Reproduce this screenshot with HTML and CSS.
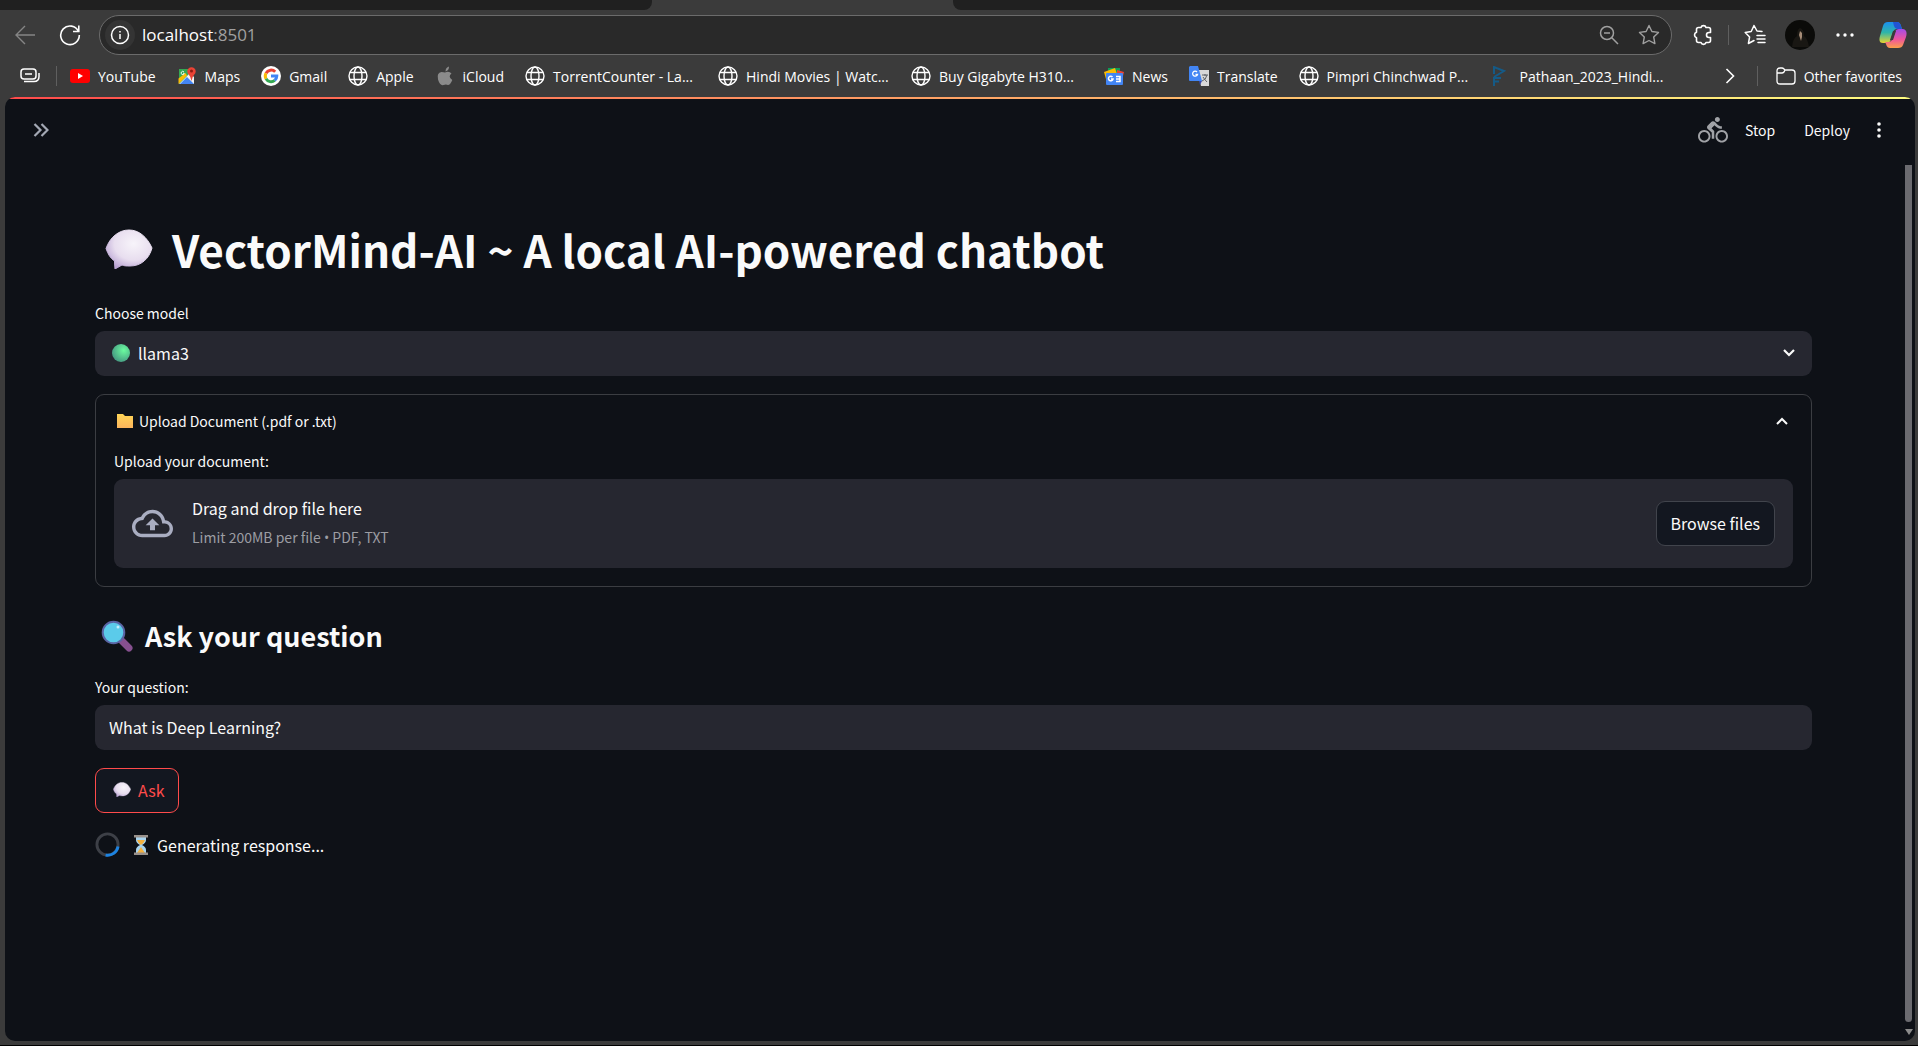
FILE: index.html
```html
<!DOCTYPE html>
<html lang="en">
<head>
<meta charset="utf-8">
<title>VectorMind-AI</title>
<link rel="stylesheet" href="styles.css">
</head>
<body>
<svg class="defs" aria-hidden="true">
  <defs>
    <radialGradient id="bubble-fill" cx="0.6" cy="0.35" r="0.7">
      <stop offset="0" stop-color="#f7f4fa"/><stop offset="0.6" stop-color="#e8deef"/><stop offset="1" stop-color="#b9a3d3"/>
    </radialGradient>
    <linearGradient id="folder-fill" x1="0" y1="0" x2="0" y2="1"><stop offset="0" stop-color="#ffd556"/><stop offset="1" stop-color="#fbb45c"/></linearGradient>
    <radialGradient id="green-fill" cx="0.65" cy="0.35" r="0.7"><stop offset="0" stop-color="#6bfb9f"/><stop offset="1" stop-color="#469a82"/></radialGradient>
    <linearGradient id="cop-a" x1="0" y1="0" x2="0" y2="1"><stop offset="0" stop-color="#1a8ff0"/><stop offset="0.5" stop-color="#2fb5a8"/><stop offset="1" stop-color="#e8d430"/></linearGradient>
    <linearGradient id="cop-b" x1="0" y1="0" x2="0" y2="1"><stop offset="0" stop-color="#a24be8"/><stop offset="0.55" stop-color="#f0569a"/><stop offset="1" stop-color="#fba04a"/></linearGradient>
    <symbol id="bubble" viewBox="0 0 48 40">
      <path d="M24 1C34 1 42 8 47 19C44 30 36 37 25 37C22 37 19 37 17 36L10 40Q9.500 36 9.500 32C5 29 3 25 1 19.500C5 8 14 1 24 1z" fill="url(#bubble-fill)" stroke="url(#bubble-fill)" stroke-linejoin="round"/>
    </symbol>
    <symbol id="globe" viewBox="0 0 20 20">
      <g fill="none" stroke="#fff" stroke-width="1.400"><circle cx="10" cy="10" r="9"/><ellipse cx="10" cy="10" rx="4" ry="9"/><path d="M2 6.500h16M2 13.500h16"/></g>
    </symbol>
  </defs>
</svg>
<div class="window">
  <div class="tabs"><span class="tab-left"></span><span class="tab-right"></span></div>
  <header class="browser">
    <div class="toolbar">
      <button class="tool" aria-label="Back"><svg width="22" height="22" viewBox="0 0 22 22" fill="none" stroke="#858585" stroke-width="1.400"><path d="M21 11H2M11 2L2 11l9 9"/></svg></button>
      <button class="tool reload" aria-label="Reload"><svg width="22" height="22" viewBox="0 0 22 22" fill="none" stroke="#fff" stroke-width="1.600"><path d="M19.500 7.500A9.300 9.300 0 1 0 20.300 11M19.800 1.500V7.500H14"/></svg></button>
      <div class="address">
        <span class="info"><svg width="20" height="20" viewBox="0 0 20 20" fill="none" stroke="#fff" stroke-width="1.500"><circle cx="10" cy="10" r="8.500"/><path d="M10 9v5M10 6v1.500"/></svg></span>
        <span class="url">localhost<span class="port">:8501</span></span>
        <button class="tool" aria-label="Zoom"><svg width="20" height="20" viewBox="0 0 20 20" fill="none" stroke="#a0a0a0" stroke-width="1.500"><circle cx="8" cy="8" r="6.500"/><path d="M5 8h6M12.800 12.800L19 19"/></svg></button>
        <button class="tool star" aria-label="Add to favorites"><svg width="22" height="22" viewBox="0 0 22 22" fill="none" stroke="#a0a0a0" stroke-width="1.400" stroke-linejoin="round"><path d="M11 1.500l2.900 6 6.600.9-4.800 4.600 1.200 6.600L11 16.500l-5.900 3.100 1.200-6.600L1.500 8.400l6.600-.9z"/></svg></button>
      </div>
      <div class="tools">
        <button class="tool" aria-label="Extensions"><svg width="20" height="22" viewBox="0 0 20 22" fill="none" stroke="#fff" stroke-width="1.600" stroke-linejoin="round"><path d="M5.500 3.500H8a2.600 2.600 0 0 1 5 0h2.500q2 0 2 2V8.500h-1.500a2.500 2.500 0 0 0 0 5h1.500v3q0 2-2 2H13a2.600 2.600 0 0 1-5 0H5.500q-2 0-2-2V13.800a2.900 2.900 0 0 1 0-5.500V5.500q0-2 2-2z"/></svg></button>
        <span class="sep"></span>
        <button class="tool" aria-label="Favorites"><svg width="22" height="22" viewBox="0 0 22 22" fill="none" stroke="#fff" stroke-width="1.500" stroke-linejoin="round" stroke-linecap="round"><path d="M18 7.500l-5-.5L10 1.500 7.200 7.500l-6 .9 4.400 4.600-1.200 6.500L10 16.500M13 11.500h8M13 15h8M14 18.500h7"/></svg></button>
        <span class="avatar"><svg width="30" height="30" viewBox="0 0 30 30"><circle cx="15" cy="15" r="15" fill="#0b0b09"/><path d="M7 27q1-9 5-11 0-7 3-8 4 1 4 8 4 3 5 11z" fill="#191713"/><path d="M15 11l2 2v4l-1 4-2-6z" fill="#a58b76"/></svg></span>
        <button class="tool" aria-label="More"><svg width="18" height="4" viewBox="0 0 18 4" fill="#fff"><circle cx="2" cy="2" r="1.700"/><circle cx="9" cy="2" r="1.700"/><circle cx="16" cy="2" r="1.700"/></svg></button>
        <button class="tool" aria-label="Copilot"><svg width="28" height="28" viewBox="0 0 28 28"><path d="M9 1h9q3 0 4 4l1 3h-5q-3 0-4 3l-2 7q-1 4-4 4H4q-5 0-3-7L4 5q1-4 5-4z" fill="url(#cop-a)"/><path d="M14 1h4q3 0 4 4l1 3h-5q-2 0-3-3z" fill="#2254d4"/><path d="M19 27h-8q-3 0-4-4l-1-2h4q3-1 4-4l2-6q1-3 4-3h4q5 1 3 8l-3 8q-1 3-5 3z" fill="url(#cop-b)"/><path d="M14 10h3l-3 9h-3z" fill="#3b3b3b"/></svg></button>
      </div>
    </div>
    <nav class="bookmarks" aria-label="Favorites bar">
      <button class="tool" aria-label="Tab groups"><svg width="20" height="16" viewBox="0 0 20 16" fill="none" stroke="#fff" stroke-width="1.500"><rect x="1" y="1" width="15" height="10" rx="3"/><path d="M5 6h7M4 13.500h10q5 0 5-5V5"/></svg></button>
      <span class="sep"></span>
      <ul class="links">
        <li><a href="#"><svg width="20" height="20" viewBox="0 0 20 20"><rect y="3" width="20" height="14" rx="3" fill="#f00"/><path d="M8 7l5 3-5 3z" fill="#fff"/></svg>YouTube</a></li>
        <li><a href="#"><svg width="20" height="20" viewBox="0 0 20 20"><path d="M2 3h12v8L2 18z" fill="#35a853"/><path d="M2 18L13 7l4 4v7z" fill="#f2f2f2"/><path d="M3 18l7-7 7 7z" fill="#4285f4"/><path d="M1.500 12.500v5.500L10 9.500 8.500 7z" fill="#fbbc04"/><path d="M14.500 15q-.5-4-2.800-6.500a4.200 4.200 0 1 1 5.600 0q-2.300 2.500-2.800 6.500z" fill="#ea4335"/><circle cx="14.500" cy="5" r="1.500" fill="#8d1b12"/><path d="M7 6a1.600 1.600 0 1 0 .3 1.300H6" fill="none" stroke="#fff" stroke-width="0.900"/></svg>Maps</a></li>
        <li><a href="#"><svg width="20" height="20" viewBox="0 0 20 20"><circle cx="10" cy="10" r="10" fill="#fff"/><g fill="none" stroke-width="3"><path d="M14.200 5.800A5.800 5.800 0 0 0 5 7.200" stroke="#ea4335"/><path d="M5 7.200a5.800 5.800 0 0 0 0 5.600" stroke="#fbbc05"/><path d="M5 12.800a5.800 5.800 0 0 0 8.700 1.600" stroke="#34a853"/><path d="M13.700 14.400A5.800 5.800 0 0 0 15.800 10H10" stroke="#4285f4"/></g></svg>Gmail</a></li>
        <li><a href="#"><svg width="20" height="20"><use href="#globe"/></svg>Apple</a></li>
        <li><a href="#"><svg width="20" height="20" viewBox="0 0 20 20" fill="#8b8b8b"><path d="M10.500 5.500Q10.500 1.500 14 .5 14.200 4.500 10.500 5.500zM10 6.500q4-2 6.500 1-4 3 .8 6.500-2 5-4.300 5-2-1-4.500 0Q5 20 3 13.500 1.500 6.500 6.500 6q2 0 3.500.5z"/></svg>iCloud</a></li>
        <li class="long"><a href="#"><svg width="20" height="20"><use href="#globe"/></svg>TorrentCounter - La...</a></li>
        <li class="long"><a href="#"><svg width="20" height="20"><use href="#globe"/></svg>Hindi Movies | Watc...</a></li>
        <li class="long"><a href="#"><svg width="20" height="20"><use href="#globe"/></svg>Buy Gigabyte H310...</a></li>
        <li><a href="#"><svg width="20" height="20" viewBox="0 0 20 20"><path d="M4 2h12v6H4z" fill="#0c9d58"/><path d="M0 6l11-4 2 6-11 5z" fill="#fbbc04"/><path d="M13 4l7 2-2 8h-5z" fill="#ea4335"/><rect x="2" y="7" width="17" height="12" rx="1" fill="#4285f4"/><g fill="none" stroke="#fff" stroke-width="1.500"><path d="M8.500 11a2.300 2.300 0 1 0 .5 2H7"/><path d="M12 10.500h4v5h-4M12 13h4"/></g></svg>News</a></li>
        <li><a href="#"><svg width="20" height="20" viewBox="0 0 20 20"><path d="M8 4h12v16h-8z" fill="#d8d8d8"/><path d="M13 9h6M16 8v2M18 9q-1 5-5 6M14 11q2 3 4 5" stroke="#5f6368" fill="none"/><path d="M1 0h8l4 15H1q-1 0-1-1V1z" fill="#4285f4"/><path d="M10 15h3l-2 4z" fill="#3949ab"/><path d="M8 6a2.500 2.500 0 1 0 .5 2.500H6.500" fill="none" stroke="#fff" stroke-width="1.300"/></svg>Translate</a></li>
        <li class="long"><a href="#"><svg width="20" height="20"><use href="#globe"/></svg>Pimpri Chinchwad P...</a></li>
        <li class="long"><a href="#"><svg width="20" height="20" viewBox="0 0 20 20" fill="none" stroke="#155a86" stroke-width="2"><path d="M2 20V12h7M2 8V1l10 4-10 6M2 15.500h5"/></svg>Pathaan_2023_Hindi...</a></li>
      </ul>
      <button class="tool more" aria-label="More favorites"><svg width="10" height="16" viewBox="0 0 10 16" fill="none" stroke="#fff" stroke-width="1.600"><path d="M1.500 1l7 7-7 7"/></svg></button>
      <span class="sep"></span>
      <a class="other" href="#"><svg width="20" height="20" viewBox="0 0 20 20" fill="none" stroke="#fff" stroke-width="1.300"><path d="M1 5q0-3 3-3h2q1 0 2 1l1 1h7q3 0 3 3v8q0 3-3 3H4q-3 0-3-3zM1 7h5q1 0 2-1l1-2"/></svg>Other favorites</a>
    </nav>
  </header>
  <div class="page">
    <div class="app-bar">
      <button class="icon-btn expand" aria-label="Open sidebar"><svg width="16" height="14" viewBox="0 0 16 14" fill="none" stroke="#a3a8b4" stroke-width="2.200"><path d="M1.500 1l6 6-6 6M8.500 1l6 6-6 6"/></svg></button>
      <svg class="bike" width="30" height="30" viewBox="0 0 24 24" fill="#a0a2a6"><path d="M15.500 5.500c1.100 0 2-.9 2-2s-.9-2-2-2-2 .9-2 2 .9 2 2 2zM5 12c-2.800 0-5 2.200-5 5s2.200 5 5 5 5-2.200 5-5-2.200-5-5-5zm0 8.500c-1.900 0-3.500-1.600-3.500-3.500s1.600-3.500 3.500-3.500 3.500 1.600 3.500 3.500-1.600 3.500-3.500 3.500zm5.800-10l2.400-2.400.8.8c1.300 1.300 3 2.100 5.100 2.100V9c-1.500 0-2.700-.6-3.600-1.500l-1.900-1.900c-.5-.4-1-.6-1.600-.6s-1.100.2-1.400.6L7.800 8.400c-.4.4-.6.900-.6 1.400 0 .6.200 1.100.6 1.400L11 14v5h2v-6.200l-2.200-2.300zM19 12c-2.800 0-5 2.200-5 5s2.200 5 5 5 5-2.200 5-5-2.200-5-5-5zm0 8.500c-1.900 0-3.500-1.600-3.500-3.500s1.600-3.500 3.500-3.500 3.500 1.600 3.500 3.500-1.600 3.500-3.500 3.500z"/></svg>
      <button class="text-btn">Stop</button>
      <button class="text-btn">Deploy</button>
      <button class="icon-btn" aria-label="Menu"><svg width="4" height="16" viewBox="0 0 4 16" fill="#fafafa"><circle cx="2" cy="2" r="1.800"/><circle cx="2" cy="8" r="1.800"/><circle cx="2" cy="14" r="1.800"/></svg></button>
    </div>
    <div class="scroll">
      <main class="content">
        <h1><svg width="48" height="40"><use href="#bubble"/></svg>VectorMind-AI ~ A local AI-powered chatbot</h1>
        <label class="label" for="model">Choose model</label>
        <div class="field select-field">
          <svg width="18" height="18" viewBox="0 0 18 18"><circle cx="9" cy="9" r="9" fill="url(#green-fill)"/></svg>
          <select id="model"><option>llama3</option></select>
          <svg width="12" height="8" viewBox="0 0 12 8" fill="none" stroke="#fafafa" stroke-width="2.200"><path d="M1 1l5 5 5-5"/></svg>
        </div>
        <details class="expander" open>
          <summary><svg width="18" height="16" viewBox="0 0 18 16"><path d="M1 1h6l2 2h8v12H1z" fill="url(#folder-fill)"/></svg><span>Upload Document (.pdf or .txt)</span><svg width="12" height="8" viewBox="0 0 12 8" fill="none" stroke="#fafafa" stroke-width="2"><path d="M1 7l5-5 5 5"/></svg></summary>
          <p class="label" id="upload-label">Upload your document:</p>
          <div class="dropzone">
            <svg width="41" height="41" viewBox="0 0 24 24" fill="#a9adc1"><path d="M19.350 10.040C18.670 6.590 15.640 4 12 4 9.110 4 6.600 5.640 5.350 8.040 2.340 8.360 0 10.910 0 14c0 3.310 2.690 6 6 6h13c2.760 0 5-2.240 5-5 0-2.640-2.050-4.780-4.650-4.960zM19 18H6c-2.210 0-4-1.790-4-4 0-2.050 1.530-3.760 3.560-3.970l1.070-.11.5-.95A5.469 5.469 0 0 1 12 6c2.620 0 4.880 1.860 5.390 4.430l.3 1.500 1.530.11A2.980 2.980 0 0 1 22 15c0 1.650-1.350 3-3 3zM8 13h2.550v3h2.900v-3H16l-4-4z"/></svg>
            <div class="drop-text"><span>Drag and drop file here</span><small>Limit 200MB per file <span class="dot">•</span> PDF, TXT</small></div>
            <button class="btn" aria-describedby="upload-label">Browse files</button>
          </div>
        </details>
        <h3><svg width="32" height="32" viewBox="0 0 32 32"><path d="M21 21l7 7" stroke="#86508f" stroke-width="7" stroke-linecap="round"/><circle cx="12.500" cy="12.500" r="10.800" fill="#5bcbea" stroke="#5a64a4" stroke-width="2"/><circle cx="17" cy="7" r="1.500" fill="#c5eefa"/></svg>Ask your question</h3>
        <label class="label" for="question">Your question:</label>
        <input class="field" id="question" type="text" value="What is Deep Learning?">
        <button class="btn ask"><svg width="18" height="15"><use href="#bubble"/></svg>Ask</button>
        <div class="status" role="status">
          <svg width="25" height="25" viewBox="0 0 26 26" fill="none" stroke-width="3"><circle cx="13" cy="13" r="11" stroke="#3d4047"/><path d="M24 15A11 11 0 0 1 11 24" stroke="#1c83e1"/></svg>
          <svg class="glass" width="14" height="20" viewBox="0 0 14 20"><path d="M2 2h10v3q0 3-4 5 4 2 4 5v3H2v-3q0-3 4-5-4-2-4-5z" fill="#a9d4ee"/><path d="M3 5h8q-1 3-4 5-3-2-4-5zM7 12l4 6H3z" fill="#f3b13f"/><path d="M0 0h14v2.500H0zM0 17.500h14V20H0z" fill="#99918b"/></svg>
          <span>Generating response...</span>
        </div>
      </main>
      <div class="scrollbar"><span class="thumb"></span><span class="arrow"></span></div>
    </div>
  </div>
</div>
</body>
</html>
```
FILE: styles.css
```css
* { box-sizing: border-box; }
body { margin: 0; background: #000; color: #fafafa; font-family: "Noto Sans CJK SC", "Noto Sans CJK JP", sans-serif; font-size: 16px; }
button, input, select { font: inherit; color: inherit; border: 0; background: none; padding: 0; margin: 0; }
svg { flex: none; display: block; }
a { color: inherit; text-decoration: none; }
.defs { position: absolute; width: 0; height: 0; }

.window { display: flex; flex-direction: column; min-height: 100vh; background: #3b3b3b; padding: 0 3px 4px 5px; border-bottom: 1px solid #000; }

.tabs { display: flex; justify-content: space-between; height: 10px; margin: 0 -3px 0 -5px; }
.tab-left, .tab-right { background: #202020; }
.tab-left { width: 34%; border-bottom-right-radius: 8px; }
.tab-right { width: 50.300%; border-bottom-left-radius: 8px; }

.browser { font-family: "Open Sans", "Noto Sans", sans-serif; font-size: 14px; color: #fff; margin: 0 -3px 0 -5px; }
.toolbar { display: flex; align-items: center; height: 50px; padding: 0 11px 1px 14px; }
.tool { display: flex; align-items: center; justify-content: center; }
.reload { margin-left: 23px; }
.address { display: flex; align-items: center; flex: 1; height: 40px; margin: 0 21px 0 18px; padding: 0 11px 0 5px; border: 1px solid #6b6b6b; border-radius: 20px; background: #292929; }
.info { display: flex; align-items: center; justify-content: center; width: 30px; height: 30px; border-radius: 50%; background: #343434; }
.url { flex: 1; margin-left: 7px; font-size: 17px; }
.port { color: #a0a0a0; }
.star { margin-left: 19px; }
.tools { display: flex; align-items: center; gap: 15px; }
.sep { width: 1px; height: 20px; background: #5f5f5f; }
.avatar { margin: 0 6px 0 4px; }
.tools .tool:last-child { margin-left: 10px; }
.bookmarks { display: flex; align-items: center; height: 37px; padding: 0 16px 5px 20px; white-space: nowrap; }
.bookmarks .sep { margin-left: 16px; }
.links { display: flex; gap: 21px; flex: 1; list-style: none; margin: 0 0 0 13px; padding: 0; }
.links a, .other { display: flex; align-items: center; gap: 8px; }
.long { width: 172px; }
.more { margin-right: 6px; }
.other { margin-left: 18px; }

.page { flex: 1; display: flex; flex-direction: column; background: #0e1117; border-radius: 10px; overflow: hidden; }
.page::before { content: ""; height: 2px; background: linear-gradient(90deg, #ff4b4b, #fffd80); }
.app-bar { display: flex; align-items: center; height: 66px; padding: 0 34px 4px 28px; font-size: 14px; }
.expand { margin-right: auto; }
.text-btn { margin-left: 17px; }
.text-btn + .text-btn { margin-left: 29px; }
.text-btn + .icon-btn { margin-left: 27px; }
.scroll { flex: 1; display: flex; }
.content { flex: 1; display: flex; flex-direction: column; align-items: stretch; padding: 51px 90px 0; }
.scrollbar { display: flex; flex-direction: column; align-items: center; width: 13px; padding-bottom: 6px; }
.thumb { flex: 1; width: 7px; border-radius: 0 0 4px 4px; background: #6b6b70; }
.arrow { margin-top: 7px; border: 4px solid transparent; border-top: 6px solid #8b8b8b; border-bottom: 0; }

h1 { display: flex; align-items: center; gap: 19px; margin: 0; padding-left: 10px; height: 66px; font-size: 44px; font-weight: 700; line-height: 66px; }
.label { font-size: 14px; line-height: 22px; margin: 0 0 7px; }
h1 + .label { margin-top: 20px; }
.field { width: 100%; height: 45px; border-radius: 9px; background: #262730; padding: 0 14px 2px; font-size: 16px; }
.select-field { display: flex; align-items: center; padding: 0 17px 2px; gap: 8px; }
select { flex: 1; appearance: none; outline: 0; }
.expander { margin-top: 18px; padding: 0 18px 18px; border: 1px solid #3b3d42; border-radius: 9px; }
summary { display: flex; align-items: center; gap: 5px; height: 55px; padding: 0 5px 3px 2px; list-style: none; font-size: 14px; }
summary span { flex: 1; }
.dropzone { display: flex; align-items: center; height: 89px; padding: 0 18px; border-radius: 9px; background: #262730; }
.drop-text { flex: 1; display: flex; flex-direction: column; margin-left: 19px; padding-bottom: 2px; line-height: 29px; }
.drop-text small { font-size: 14px; color: #9c9da3; }
.dot { font-family: "Open Sans", sans-serif; }
.btn { height: 45px; padding: 0 14px 2px; border: 1px solid #41444c; border-radius: 9px; background: #131720; }
h3 { display: flex; align-items: center; gap: 12px; margin: 30px 0 21px; padding-left: 6px; font-size: 27px; font-weight: 600; line-height: 38px; }
.ask { display: flex; align-items: center; align-self: flex-start; gap: 7px; margin-top: 18px; padding: 0 14px 2px 17px; border-color: #ff4b4b; color: #ff4b4b; }
.status { display: flex; align-items: center; margin-top: 19px; }
.glass { margin: 0 9px 0 14px; }
```
